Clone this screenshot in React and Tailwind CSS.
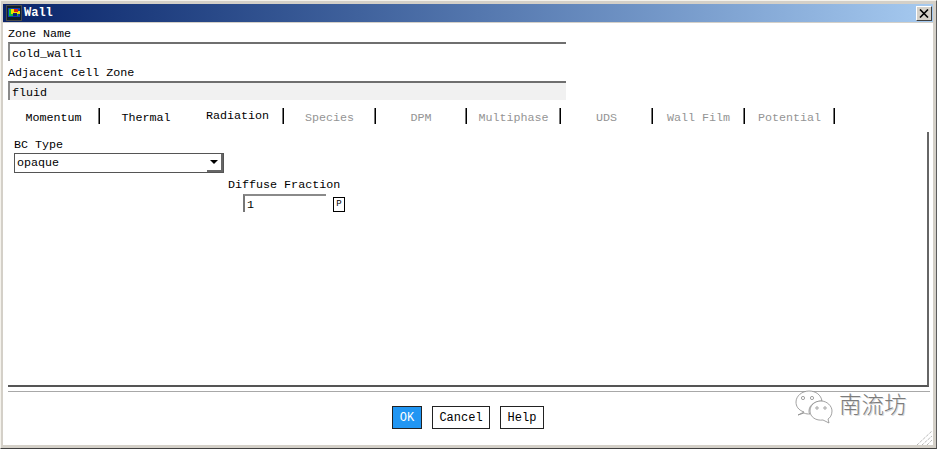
import React from 'react';

const MONO = "font-['Liberation_Mono',_'DejaVu_Sans_Mono',_monospace]";

const tabs = [
  { label: 'Momentum', width: 'w-[92px]', sep: true },
  { label: 'Thermal', width: 'w-[92px]', sep: false },
  { label: 'Radiation', width: 'w-[92px]', sep: true, active: true },
  { label: 'Species', width: 'w-[92px]', sep: true, off: true },
  { label: 'DPM', width: 'w-[91px]', sep: true, off: true },
  { label: 'Multiphase', width: 'w-[94px]', sep: true, off: true },
  { label: 'UDS', width: 'w-[92px]', sep: true, off: true },
  { label: 'Wall Film', width: 'w-[92px]', sep: true, off: true },
  { label: 'Potential', width: 'w-[90px]', sep: true, off: true },
];

const AppIcon = () => (
  <svg width="16" height="16" viewBox="0 0 16 16" className="shrink-0">
    <rect x="0" y="0" width="16" height="16" fill="#4a4a4a" />
    <rect x="1" y="1" width="14" height="14" fill="#10202c" />
    <rect x="2" y="3" width="12" height="9" fill="#1040b0" />
    <rect x="3" y="4" width="9" height="7" fill="#10c040" />
    <rect x="5" y="4" width="7" height="5" fill="#f0e000" />
    <rect x="8" y="4" width="4" height="3" fill="#e02010" />
    <rect x="7" y="8" width="4" height="3" fill="#102070" />
    <rect x="12" y="6" width="2" height="3" fill="#f0e000" />
  </svg>
);

const WeChat = () => (
  <svg width="38" height="34" viewBox="0 0 38 34" fill="none" stroke="#8a8a8a" strokeWidth="0.8">
    <path d="M9 22 C3 20 1 16 1 12 C1 6 7 1 14 1 C21 1 26 5 27 11 C20 11 14 15 14 21 C14 22 14 23 15 24 C13 24 11 24 9 23 L3 25 Z" fill="#fff" />
    <path d="M15 21 C15 15 20 11 26 11 C32 11 37 16 37 21 C37 25 35 28 33 29 L34 33 L28 30 C21 31 15 27 15 21 Z" fill="#fff" />
    <circle cx="8" cy="8" r="1.6" />
    <circle cx="17" cy="8" r="1.6" />
    <circle cx="22" cy="18" r="1.2" />
    <circle cx="30" cy="18" r="1.2" />
  </svg>
);

const Field = ({ label, value, bg }) => (
  <div className="flex flex-col">
    <div className="h-[19px] leading-[23px]">{label}</div>
    <div className={`w-[558px] h-[19px] border-t-2 border-l-2 border-t-[#6f6f6f] border-l-[#8a8a8a] pl-[2px] leading-[20px] ${bg}`}>
      {value}
    </div>
  </div>
);

const Button = ({ children, width, primary }) => (
  <button
    className={`${width} h-[23px] border border-[#222] text-[12px] leading-[23px] text-center ${
      primary ? 'bg-[#2196f3] text-white' : 'bg-white text-black'
    }`}
  >
    {children}
  </button>
);

const App = () => {
  return (
    <div className={`relative w-[937px] h-[449px] overflow-hidden bg-[#d4d0c8] border-t border-l border-t-[#f4f2ec] border-l-[#f4f2ec] border-r border-b border-r-[#5c5c5c] border-b-[#404040] flex flex-col pt-[3px] pl-[2px] pr-[3px] pb-[3px] text-[11.7px] text-black ${MONO}`}>
      {/* title bar */}
      <div className="h-[18px] shrink-0 flex items-center justify-between pl-[3px] pr-[1px] bg-gradient-to-r from-[#0a246a] to-[#a6caf0]">
        <div className="flex items-center gap-[2px]">
          <AppIcon />
          <span className="font-bold text-white text-[12px]">Wall</span>
        </div>
        <div className="w-[16px] h-[15px] bg-[#d4d0c8] border border-t-white border-l-white border-r-[#404040] border-b-[#404040] flex items-center justify-center">
          <svg width="10" height="9" viewBox="0 0 10 9" stroke="#000" strokeWidth="1.6">
            <path d="M1 0.5 L9 8.5 M9 0.5 L1 8.5" />
          </svg>
        </div>
      </div>

      {/* body */}
      <div className="mt-[1px] flex-1 min-h-0 bg-white flex flex-col pl-[5px]">
        <div className="flex flex-col gap-[1px]">
          <Field label="Zone Name" value="cold_wall1" bg="bg-white" />
          <Field label="Adjacent Cell Zone" value="fluid" bg="bg-[#f1f1f1]" />
        </div>

        {/* tabs */}
        <div className="flex mt-[8px] h-[16px] shrink-0">
          {tabs.map((tab) => (
            <div key={tab.label} className={`${tab.width} flex justify-center ${tab.sep ? 'border-r border-r-black shadow-[inset_-1px_0_0_#777]' : ''}`}>
              <span className={`leading-[20px] ${tab.off ? 'text-[#949494]' : ''} ${tab.active ? '-translate-y-[2px]' : ''}`}>
                {tab.label}
              </span>
            </div>
          ))}
        </div>

        {/* tab panel */}
        <div className="mt-[8px] w-[921px] h-[255px] shrink-0 border-r-2 border-b-2 border-r-[#666] border-b-[#555] pl-[6px] flex flex-col">
          <div className="mt-[5px] h-[16px] leading-[16px]">BC Type</div>
          <div className="w-[210px] h-[20px] border border-[#555] flex items-center justify-between pl-[2px]">
            <span className="pt-[2px]">opaque</span>
            <div className="w-[16px] h-[18px] border-r-2 border-b-2 border-r-[#666] border-b-[#666] flex items-center justify-center">
              <svg width="8" height="4" viewBox="0 0 8 4"><path d="M0 0 H8 L4 4 Z" fill="#000" /></svg>
            </div>
          </div>
          <div className="ml-[214px] mt-[4px] h-[16px] leading-[16px]">Diffuse Fraction</div>
          <div className="ml-[229px] mt-[1px] flex items-end gap-[7px]">
            <div className="w-[83px] h-[18px] border-t-2 border-l-2 border-t-[#8a8a8a] border-l-[#777] pl-[2px] leading-[18px]">1</div>
            <div className="w-[12px] h-[15px] border border-black text-[9px] leading-[13px] text-center">P</div>
          </div>
        </div>

        {/* footer */}
        <div className="mt-[4px] w-[922px] border-t border-t-[#a8a8a8] flex justify-center gap-[10px] pt-[14px] pr-[2px]">
          <Button width="w-[30px]" primary>OK</Button>
          <Button width="w-[58px]">Cancel</Button>
          <Button width="w-[44px]">Help</Button>
        </div>
      </div>

      {/* size grip */}
      <svg width="16" height="14" viewBox="0 0 16 14" className="absolute left-[916px] top-[430px]" stroke="#9a9a9a" strokeWidth="1" strokeDasharray="1 1">
        <path d="M0 14 L15 0 M5 14 L15 5 M10 14 L15 9" />
      </svg>

      {/* watermark */}
      <div className="absolute left-[794px] top-[389px] flex items-center gap-[6px]">
        <WeChat />
        <span className="-mt-[6px] font-['Noto_Sans_CJK_SC',_sans-serif] text-[22.5px] text-[#7c7c7c] font-light [text-shadow:1px_1px_0_#d8d8d8]">南流坊</span>
      </div>
    </div>
  );
};

export default App;
